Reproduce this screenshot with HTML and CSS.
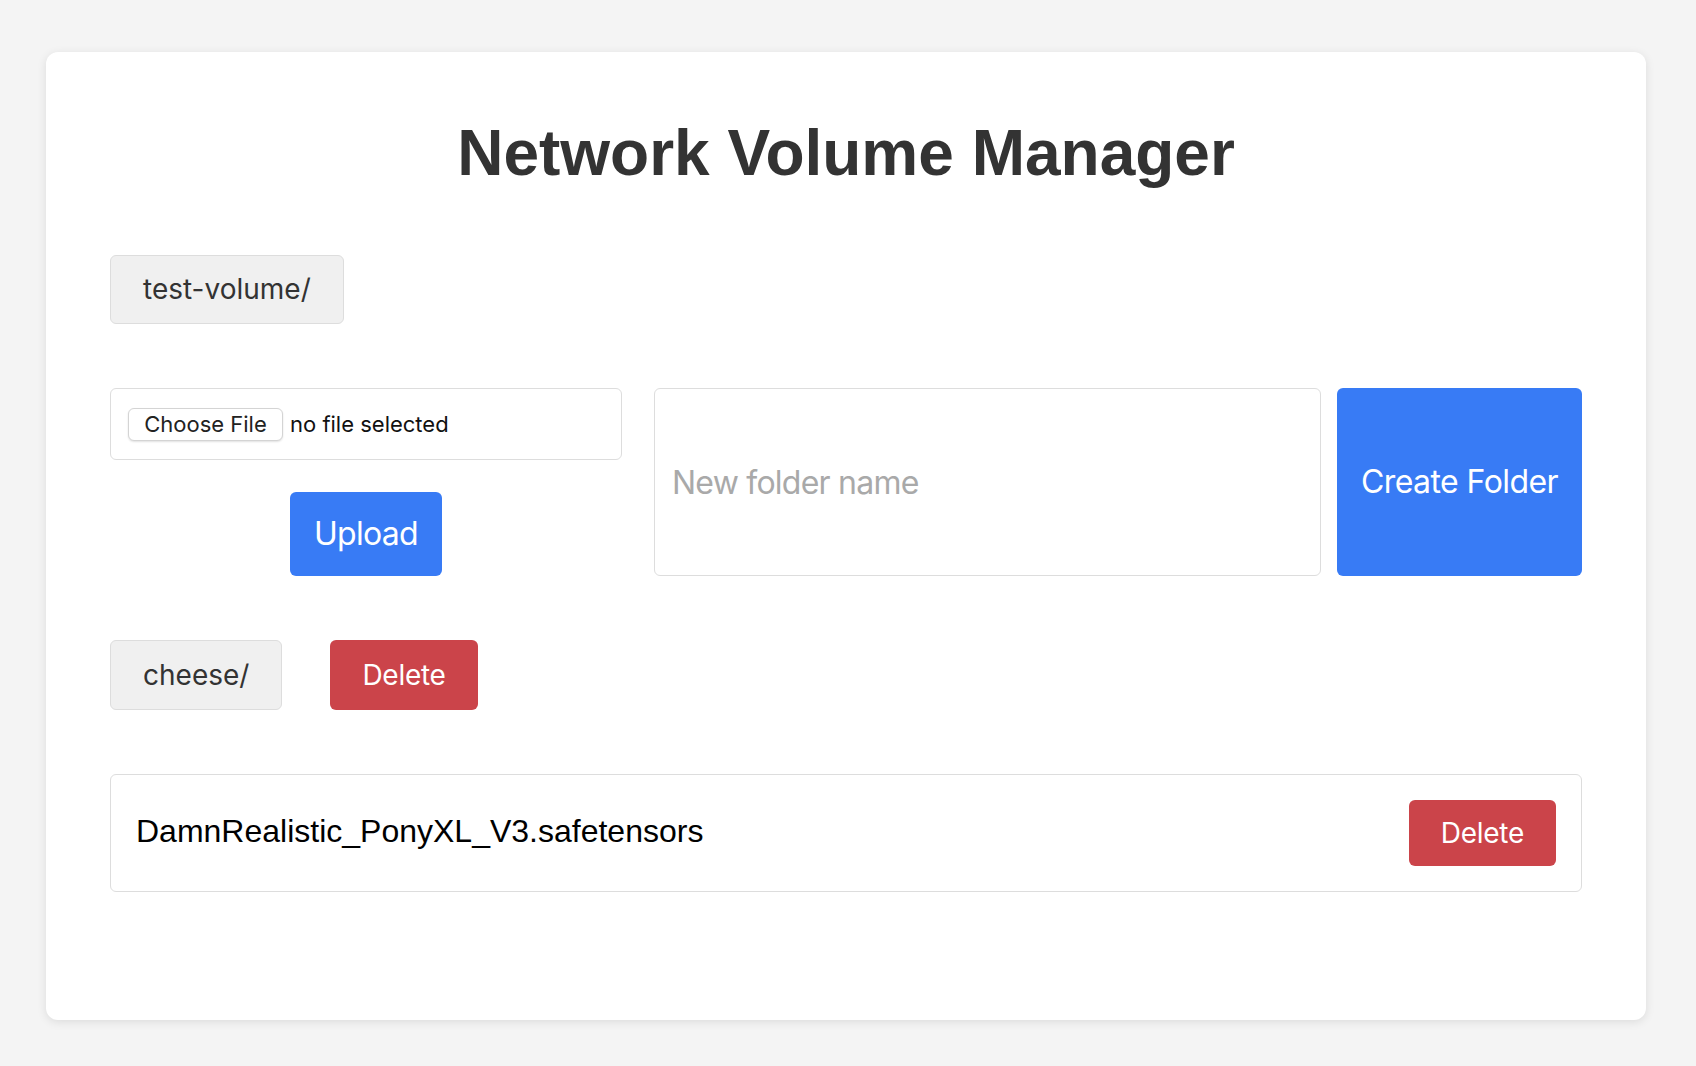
FILE: index.html
```html
<!DOCTYPE html>
<html lang="en">
<head>
<meta charset="utf-8">
<title>Network Volume Manager</title>
<link rel="stylesheet" href="styles.css">
</head>
<body>
<main class="card">
  <h1 class="title">Network Volume Manager</h1>
  <nav class="crumbs">
    <button class="chip">test-volume/</button>
  </nav>
  <section class="actions">
    <div class="upload">
      <label class="file-box">
        <span class="file-btn">Choose File</span>
        <span class="file-label">no file selected</span>
      </label>
      <button class="btn btn-blue btn-upload">Upload</button>
    </div>
    <div class="folder">
      <input class="folder-input" type="text" placeholder="New folder name">
      <button class="btn btn-blue btn-create">Create Folder</button>
    </div>
  </section>
  <div class="dir-row">
    <button class="chip">cheese/</button>
    <button class="btn btn-red btn-del-dir">Delete</button>
  </div>
  <div class="file-row">
    <span class="file-name">DamnRealistic_PonyXL_V3.safetensors</span>
    <button class="btn btn-red btn-del-file">Delete</button>
  </div>
</main>
</body>
</html>
```

FILE: styles.css
```css
* { box-sizing: border-box; }

html, body {
  margin: 0;
  background: #f4f4f4;
}

body {
  padding: 52px 50px 46px 46px;
  font-family: Inter, "Noto Sans", sans-serif;
}

.card {
  width: 1600px;
  height: 968px;
  background: #ffffff;
  border-radius: 12px;
  box-shadow: 0 2px 10px rgba(0, 0, 0, 0.1);
  padding: 64px;
}

.title {
  margin: 0 0 65px;
  font-family: "Liberation Sans", Arial, sans-serif;
  font-weight: bold;
  font-size: 64px;
  line-height: 74px;
  color: #333333;
  text-align: center;
}

.crumbs {
  display: flex;
  margin-bottom: 64px;
}

.chip {
  font-family: Inter, "Noto Sans", sans-serif;
  font-size: 28px;
  line-height: 35px;
  padding: 16px 32px;
  background: #f0f0f0;
  color: #333333;
  border: 1px solid #dddddd;
  border-radius: 6px;
}

.dir-row .chip {
  line-height: 34px;
  padding: 17px 32px;
}

.btn {
  font-family: Inter, "Noto Sans", sans-serif;
  border: none;
  color: #ffffff;
  border-radius: 6px;
}

.btn-blue { background: #387bf5; }
.btn-red { background: #cb444a; }

.actions {
  display: flex;
  gap: 32px;
  margin-bottom: 64px;
}

.upload {
  width: 512px;
  display: flex;
  flex-direction: column;
  align-items: center;
  gap: 32px;
}

.file-box {
  align-self: stretch;
  display: flex;
  align-items: center;
  gap: 7px;
  height: 72px;
  padding: 0 17px;
  border: 1px solid #dddddd;
  border-radius: 6px;
  font-size: 22px;
  color: #111111;
}

.file-btn {
  display: flex;
  align-items: center;
  justify-content: center;
  width: 155px;
  height: 33px;
  background: #ffffff;
  border: 1px solid #d4d4d4;
  border-radius: 6px;
  box-shadow: 0 1px 2px rgba(0, 0, 0, 0.12);
  color: #222222;
}

.btn-upload {
  font-size: 32px;
  line-height: 36px;
  letter-spacing: -0.022em;
  padding: 24px;
}

.folder {
  flex: 1;
  display: flex;
  gap: 16px;
}

.folder-input {
  flex: 1;
  min-width: 0;
  font-family: Inter, "Noto Sans", sans-serif;
  font-size: 32px;
  letter-spacing: -0.024em;
  padding: 0 17px;
  border: 1px solid #dddddd;
  border-radius: 6px;
  color: #333333;
  outline: none;
}

.folder-input::placeholder { color: #a9a9a9; }

.btn-create {
  font-size: 32px;
  line-height: 36px;
  letter-spacing: -0.018em;
  padding: 0 24px;
}

.dir-row {
  display: flex;
  gap: 48px;
  margin-bottom: 64px;
}

.btn-del-dir {
  font-size: 28px;
  line-height: 34px;
  letter-spacing: -0.01em;
  padding: 18px 32px;
}

.file-row {
  display: flex;
  align-items: center;
  justify-content: space-between;
  padding: 25px;
  border: 1px solid #dddddd;
  border-radius: 6px;
}

.file-name {
  font-family: "Liberation Sans", Arial, sans-serif;
  font-size: 32px;
  color: #000000;
  margin-top: -3px;
}

.btn-del-file {
  font-size: 28px;
  line-height: 34px;
  letter-spacing: -0.01em;
  padding: 16px 32px;
}
```
